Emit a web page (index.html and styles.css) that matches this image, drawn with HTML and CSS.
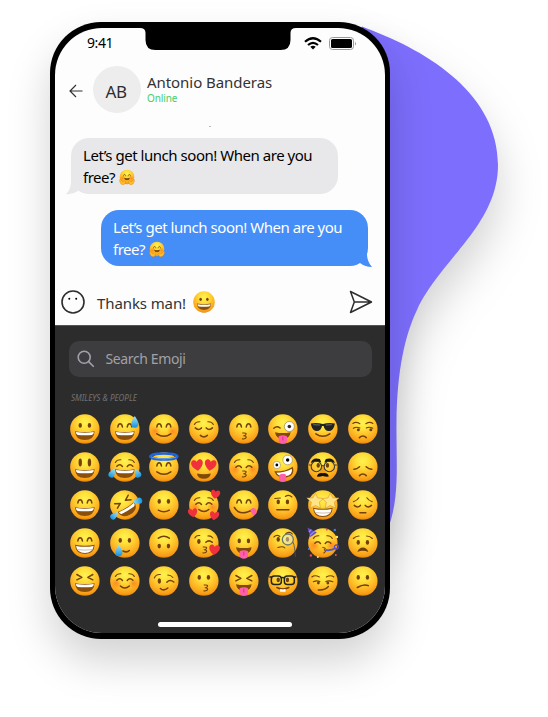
FILE: index.html
```html
<!DOCTYPE html>
<html lang="en">
<head>
<meta charset="utf-8">
<title>Chat</title>
<link rel="stylesheet" href="styles.css">
</head>
<body>
<svg class="defs" width="0" height="0" aria-hidden="true">
  <defs>
    <radialGradient id="skin" cx=".5" cy=".3" r=".72">
      <stop offset="0" stop-color="#fff250"/><stop offset=".3" stop-color="#ffe03a"/>
      <stop offset=".68" stop-color="#fdb424"/><stop offset=".9" stop-color="#f79a14"/><stop offset="1" stop-color="#cf7208"/>
    </radialGradient>
    <radialGradient id="blush"><stop offset="0" stop-color="#ff5a1c" stop-opacity=".55"/><stop offset="1" stop-color="#ff6a1c" stop-opacity="0"/></radialGradient>
    <linearGradient id="water" x1="0" y1="0" x2="0" y2="1"><stop offset="0" stop-color="#a5e4fb"/><stop offset="1" stop-color="#1490d8"/></linearGradient>
    <g id="face"><circle r="14.700" fill="url(#skin)"/></g>
    <g id="cheeks"><circle cx="-8.600" cy="2.200" r="5.400" fill="url(#blush)"/><circle cx="8.600" cy="2.200" r="5.400" fill="url(#blush)"/></g>
    <g id="dots" fill="#734009"><ellipse cx="-4.600" cy="-3.600" rx="1.700" ry="2.300"/><ellipse cx="4.600" cy="-3.600" rx="1.700" ry="2.300"/></g>
    <g id="tall" fill="#734009"><ellipse cx="-4.600" cy="-4.500" rx="1.700" ry="4"/><ellipse cx="4.600" cy="-4.500" rx="1.700" ry="4"/></g>
    <g id="happy" class="ln"><path d="M-7-2C-6.500-6.500-3-6.500-2.400-2M2.400-2C3-6.500 6.500-6.500 7-2"/></g>
    <g id="shut" class="ln"><path d="M-8.600-1.100Q-5.300 2-2.400-1.100M2.400-1.100Q5.300 2 8.600-1.100"/></g>
    <g id="arcs" class="ln"><path d="M-8-.8Q-5-3.600-2.400-.6M2.400-.6Q5-3.600 8-.8"/></g>
    <g id="brows" class="ln thin"><path d="M-9.500-4.600Q-8-7.400-4-7.200M9.500-4.600Q8-7.400 4-7.200"/></g>
    <g id="squint" class="ln"><path d="M-8-6.500L-3-3.700-8-1.200M8-6.500L3-3.700 8-1.200"/></g>
    <g id="grin"><path d="M-9.800 2.200Q0 4 9.800 2.200Q9.400 11 0 11Q-9.400 11-9.800 2.200Z" fill="#8a4f0a"/><path d="M-9 2.900Q0 4.500 9 2.900Q8.800 5.700 7 6Q0 6.700-7 6Q-8.800 5.700-9 2.900Z" fill="#fff"/></g>
    <g id="beam"><path d="M-9.800 1.800Q0 3.600 9.800 1.800Q9.400 11 0 11Q-9.400 11-9.800 1.800Z" fill="#8b5110"/><path d="M-8.800 2.900Q0 4.600 8.800 2.900Q7.800 9.900 0 9.900Q-7.800 9.900-8.800 2.900Z" fill="#fff"/><path d="M-8 6.600Q0 7.600 8 6.600" fill="none" stroke="#b9a48a" stroke-width=".7"/></g>
    <g id="smile" class="ln"><path d="M-7 4.800Q0 9.800 7 4.800"/></g>
    <g id="smallsmile" class="ln"><path d="M-3.500 6.400Q0 9.600 3.500 6.400"/></g>
    <g id="kiss" class="ln thin"><path d="M-1.200 4Q3 3.600 2.100 5.400Q1.600 6.600-.2 6.800Q3 7.100 2.200 8.800Q1.600 10.200-1.400 9.900"/></g>
    <g id="frown" class="ln"><path d="M-3.400 8.600Q0 5.200 3.400 8.600"/></g>
    <g id="tongue"><path d="M-7.800 3.200Q0 5 7.800 3.200Q7 9.800 0 9.800Q-7 9.800-7.800 3.200Z" fill="#804908"/><path d="M-4.200 7.300Q0 5.400 4.200 7.300V11Q4 14.800 0 14.800Q-4 14.800-4.200 11Z" fill="#ff5ea8"/><path d="M0 7.600V11.400" stroke="#d92f82" stroke-width=".9"/></g>
    <path id="heart" d="M0 4.400C-7-.3-4.800-5.200-1.800-4.400Q-.4-4 0-2.600Q.4-4 1.800-4.400C4.800-5.200 7-.3 0 4.400Z" fill="#f0303c"/>
    <path id="drop" d="M0-6Q3.600-.6 3.600 2A3.600 3.800 0 0 1-3.600 2Q-3.600-.6 0-6Z" fill="url(#water)"/>
    <g id="hug">
      <use href="#face"/><use href="#cheeks"/><use href="#happy"/><path d="M-6 1.500Q0 3 6 1.500Q5 6.600 0 6.600Q-5 6.600-6 1.500Z" fill="#804908"/>
      <g fill="#ffbd2a" stroke="#d98412" stroke-width=".8"><path d="M-15 6Q-14 3-12 6L-9 9.500L-4 7Q-2 7.500-3.500 9.500Q-2 14-7 15.400Q-14 16-15 6Z"/><path d="M15 6Q14 3 12 6L9 9.500L4 7Q2 7.500 3.500 9.500Q2 14 7 15.400Q14 16 15 6Z"/></g>
    </g>
  </defs>
</svg>

<main class="stage">
  <svg class="blob" width="548" height="717" viewBox="0 0 548 717" aria-hidden="true">
    <path d="M340 60L362 26.500L367 28.500C430 52 498 95 498 165C498 225 440 260 417 310C405 335 397 370 396.500 423C396 460 400 495 389 526L340 540Z" fill="#7d6efd"/>
  </svg>

  <section class="phone">
    <div class="screen">
      <svg class="notch" width="156" height="22" viewBox="0 0 156 22" aria-hidden="true"><path d="M0 0Q5.500 0 5.500 5V12Q5.500 22 15.500 22H140.500Q150.500 22 150.500 12V5Q150.500 0 156 0Z"/></svg>

      <header class="status">
        <span class="clock">9:41</span>
        <svg class="wifi" width="18" height="13" viewBox="0 0 18 13"><g fill="none" stroke="#000" stroke-width="2.200"><path d="M1 4.800Q9-2.300 17 4.800"/><path d="M4 8Q9 3.600 14 8"/></g><path d="M6.300 9.700Q9 7.600 11.700 9.700L9 12.500Z"/></svg>
        <svg class="battery" width="28" height="13" viewBox="0 0 28 13"><rect x=".5" y=".5" width="24" height="12" rx="3" fill="none" stroke="#999"/><rect x="2" y="2" width="21" height="9" rx="1.600"/><path d="M26 4.500Q27.600 6.500 26 8.500Z" fill="#888"/></svg>
      </header>

      <div class="contact">
        <svg class="back" width="14" height="14" viewBox="0 0 14 14"><path d="M13.500 7H1M7 1L1 7L7 13" fill="none" stroke="#333" stroke-width="1.200"/></svg>
        <div class="avatar">AB</div>
        <div class="who"><div class="name">Antonio Banderas</div><div class="online">Online</div></div>
      </div>
      <div class="mark"></div>

      <div class="messages">
        <div class="bubble received">
          <svg class="tail" width="16" height="18" viewBox="0 0 16 18"><path d="M5 0Q6 12 0 17Q6 18 12 14L16 10V0Z" fill="#e8e8ea"/></svg>
          <p>Let’s get lunch soon! When are you<br>free? <svg class="inline-emoji" viewBox="-16 -16 32 32"><use href="#hug"/></svg></p>
        </div>
        <div class="bubble sent">
          <svg class="tail" width="16" height="18" viewBox="0 0 16 18"><path d="M11 0Q10 12 16 18Q9 18 4 14L0 10V0Z" fill="#458df7"/></svg>
          <p>Let’s get lunch soon! When are you<br>free? <svg class="inline-emoji" viewBox="-16 -16 32 32"><use href="#hug"/></svg></p>
        </div>
      </div>

      <div class="composer">
        <svg width="24" height="24" viewBox="0 0 24 24"><circle cx="12" cy="12" r="11" fill="none" stroke="#2d2d2d" stroke-width="1.600"/><circle cx="8.300" cy="8.800" r="1"/><circle cx="15.200" cy="8.800" r="1"/></svg>
        <span class="draft">Thanks man!</span>
        <svg class="draft-emoji" viewBox="-15 -15 30 30"><use href="#face"/><use href="#dots"/><use href="#grin"/></svg>
        <svg class="send" width="24" height="24" viewBox="0 0 24 24"><path d="M1.500 1.500L22.500 12L1.500 22.500L5.300 12ZM5.300 12H22" fill="none" stroke="#2d2d2d" stroke-width="1.500" stroke-linejoin="round"/></svg>
      </div>

      <div class="keyboard">
        <div class="search">
          <svg width="18" height="18" viewBox="0 0 18 18"><g fill="none" stroke="#a1a1a7" stroke-width="1.600" stroke-linecap="round"><circle cx="7.200" cy="7.200" r="6"/><path d="M11.600 11.600L16.300 16.300"/></g></svg>
          <span>Search Emoji</span>
        </div>
        <div class="category">SMILEYS &amp; PEOPLE</div>

        <div class="grid">
          <svg viewBox="-19.85 -19 39.7 38"><use href="#face"/><use href="#dots"/><use href="#grin"/></svg>
          <svg viewBox="-19.85 -19 39.7 38"><use href="#face"/><use href="#happy"/><use href="#grin"/><use href="#drop" x="10" y="-7"/></svg>
          <svg viewBox="-19.85 -19 39.7 38"><use href="#face"/><use href="#cheeks"/><use href="#happy"/><use href="#smile"/></svg>
          <svg viewBox="-19.85 -19 39.7 38"><use href="#face"/><use href="#brows"/><use href="#shut"/><use href="#smallsmile"/></svg>
          <svg viewBox="-19.85 -19 39.7 38"><use href="#face"/><use href="#happy"/><use href="#kiss"/></svg>
          <svg viewBox="-19.85 -19 39.7 38"><use href="#face"/><path class="ln" d="M-9-.8Q-6-3.500-2.800-1"/><use href="#tongue"/><circle cx="6.500" cy="-2.500" r="5" fill="#fff" stroke="#83704f" stroke-width=".6"/><circle cx="6.500" cy="-2.500" r="1.800" fill="#352b24"/></svg>
          <svg viewBox="-19.85 -19 39.7 38"><use href="#face"/><path d="M-12-5.500Q-6-6.500 0-5Q6-6.500 12-5.500L11.500-3Q10 2 6 2Q1.800 2 .8-3H-.8Q-1.800 2-6 2Q-10 2-11.500-3Z" fill="#202224"/><path d="M-9.500-4.300L-3-4M3-4L9-4.300" stroke="#6c6c6c"/><use href="#smile"/></svg>
          <svg viewBox="-19.85 -19 39.7 38"><use href="#face"/><path class="ln thin" d="M-10-5.500Q-7-7.800-3-5.300M10-5.500Q7-7.800 3-5.300"/><path class="ln thin" d="M-9.500-.7Q-6.500-2.500-3-1M3.500-1Q6.500-2.500 10-.7"/><circle cx="-4.500" cy=".8" r="1.500" fill="#734009"/><circle cx="8" cy=".8" r="1.500" fill="#734009"/><use href="#frown"/></svg>

          <svg viewBox="-19.85 -19 39.7 38"><use href="#face"/><use href="#tall"/><use href="#grin"/></svg>
          <svg viewBox="-19.85 -19 39.7 38"><use href="#face"/><use href="#brows"/><use href="#arcs"/><use href="#grin"/><use href="#drop" transform="translate(-12.500 6) rotate(28) scale(.85)"/><use href="#drop" transform="translate(12.500 6) rotate(-28) scale(.85)"/></svg>
          <svg viewBox="-19.85 -19 39.7 38"><use href="#face"/><ellipse cy="-10.600" rx="13.500" ry="3" fill="none" stroke="#2164dd" stroke-width="2.500"/><path d="M-12.500-10Q0-6 12.500-10" fill="none" stroke="#69b7ff" stroke-width=".8"/><use href="#happy" y="1"/><use href="#smile"/></svg>
          <svg viewBox="-19.85 -19 39.7 38"><use href="#face"/><use href="#heart" transform="translate(-6.500 -1.700) rotate(-8) scale(1.250)"/><use href="#heart" transform="translate(6.500 -1.700) rotate(8) scale(1.250)"/><path d="M-7 6.500Q0 8 7 6.500Q6 11.800 0 11.800Q-6 11.800-7 6.500Z" fill="#804908"/></svg>
          <svg viewBox="-19.85 -19 39.7 38"><use href="#face"/><use href="#cheeks"/><use href="#brows"/><use href="#arcs" y="1"/><use href="#kiss"/></svg>
          <svg viewBox="-19.85 -19 39.7 38"><use href="#face"/><g stroke="#806e50" stroke-width=".5" fill="#fff"><circle cx="-6" cy="-2" r="3.700"/><circle cx="4.800" cy="-7" r="4.800"/></g><circle cx="-6" cy="-2" r="1.400"/><circle cx="4.800" cy="-7" r="1.700"/><path d="M-7.500 5Q3 5 9.500.7Q11.500 9 2 10Q-5 10.500-7.500 5Z" fill="#fff" stroke="#804908" stroke-width="1.300"/><path d="M-3.800 8Q0 6 3 7.500L3.500 11.500Q3.500 15 0 15Q-3.800 15-3.800 11Z" fill="#ff5ea8"/></svg>
          <svg viewBox="-19.85 -19 39.7 38"><use href="#face"/><use href="#dots" y="2"/><path d="M-12-4Q-10.500-10-3-8L-1.500-4.500Q-7-6-12-4ZM12-4Q10.500-10 3-8L1.500-4.500Q7-6 12-4Z" fill="#171717"/><path d="M-1.500 0Q0-2 1.500 0L3.500 6.500Q0 8-3.500 6.500Z" fill="#eca01c"/><g fill="none" stroke="#403c37" stroke-width="1.100"><circle cx="-6.500" cy="-.5" r="5.200"/><circle cx="6.500" cy="-.5" r="5.200"/><path d="M-1.500-1Q0-2 1.500-1M-14-2H-12M12-2H14"/></g><path d="M-6 9.500Q-5 5.500 0 6.200Q5 5.500 6 9.500Q3 10 0 9Q-3 10-6 9.500Z" fill="#15100c"/></svg>
          <svg viewBox="-19.85 -19 39.7 38"><use href="#face"/><path class="ln" d="M-9 2.200Q-6 2.300-3.300-.2M9 2.200Q6 2.300 3.300-.2"/><use href="#frown"/></svg>

          <svg viewBox="-19.85 -19 39.7 38"><use href="#face"/><use href="#happy"/><use href="#grin"/></svg>
          <svg viewBox="-19.85 -19 39.7 38"><g transform="rotate(-32)"><use href="#face"/><use href="#squint"/><use href="#grin"/></g><use href="#drop" transform="translate(-10.500 10.500) rotate(45) scale(.8)"/><use href="#drop" transform="translate(12.500 -4) rotate(-100) scale(.85)"/></svg>
          <svg viewBox="-19.85 -19 39.7 38"><use href="#face"/><use href="#dots"/><path class="ln" d="M-5.500 5.200Q0 8.500 5.500 5.200"/></svg>
          <svg viewBox="-19.85 -19 39.7 38"><use href="#face"/><use href="#cheeks"/><use href="#brows"/><use href="#arcs"/><path class="ln" d="M-5 4.500Q0 8.500 5 4.500"/><use href="#heart" transform="translate(11.500 -10.500) rotate(8)"/><use href="#heart" transform="translate(-11 8) rotate(-8)"/><use href="#heart" transform="translate(10.500 11) rotate(8)"/></svg>
          <svg viewBox="-19.85 -19 39.7 38"><use href="#face"/><use href="#happy"/><path class="ln" d="M-9.500 2.500Q-4 12 9 4.500"/><path d="M6.500 5Q10 1 12.500 5Q14 9 10 10Q8 10 6.500 5Z" fill="#ff5ea8"/></svg>
          <svg viewBox="-19.85 -19 39.7 38"><use href="#face"/><use href="#dots" y=".5"/><path class="ln thin" d="M-8-6.500L-2.500-7M2.500-8.500Q6-11 9-8"/><path class="ln" d="M-6 4.800H6"/></svg>
          <svg viewBox="-19.85 -19 39.7 38"><use href="#face"/><use href="#beam" y="1"/><g fill="#ffe488" stroke="#d99a33" stroke-width=".6"><path id="star" d="M-7.500-11.500L-5-7L1-6.500L-3.500-3L-2.500 3L-7.500 .5L-12.500 3L-11.500-3L-16-7L-10-7Z"/><use href="#star" transform="scale(-1 1)"/></g></svg>
          <svg viewBox="-19.85 -19 39.7 38"><use href="#face"/><path class="ln thin" d="M-9.500-3.300Q-5.500-4.500-4-7.200M9.500-3.300Q5.500-4.500 4-7.200"/><use href="#shut" y="1.500"/><path class="ln" d="M-3 7.800H3"/></svg>

          <svg viewBox="-19.85 -19 39.7 38"><use href="#face"/><use href="#happy"/><use href="#beam"/></svg>
          <svg viewBox="-19.85 -19 39.7 38"><use href="#face"/><use href="#dots" y="1"/><path class="ln" d="M-2 8Q2 10 4.500 7.500"/><use href="#drop" x="-6" y="7.500"/></svg>
          <svg viewBox="-19.85 -19 39.7 38"><use href="#face"/><g transform="rotate(180)"><use href="#dots" y=".5"/><path class="ln" d="M-5.500 4.800Q0 8.600 5.500 4.800"/></g></svg>
          <svg viewBox="-19.85 -19 39.7 38"><use href="#face"/><ellipse cx="-5" cy="-1.500" rx="1.700" ry="2.400" fill="#734009"/><path class="ln" d="M2-.7Q5-3.500 8.500-.7"/><path class="ln thin" d="M-9-5Q-8-8-4-7.500M4-7Q7-7.500 9-5"/><use href="#kiss" x=".5"/><use href="#heart" transform="translate(10.500 7) rotate(8) scale(1.150)"/></svg>
          <svg viewBox="-19.85 -19 39.7 38"><use href="#face"/><use href="#dots" y="1.500"/><use href="#tongue" y="1"/></svg>
          <svg viewBox="-19.85 -19 39.7 38"><use href="#face"/><use href="#dots"/><path class="ln thin" d="M-9-6Q-6-9-3-6.500M3-9.500Q7-12 9.500-9M-5 4.500Q0 3 2 4.800"/><circle cx="5" cy="-3.500" r="5.500" fill="#e9eee0" fill-opacity=".45" stroke="#68777a" stroke-width="1.300"/><path d="M10-1Q12 2 12.500 14" fill="none" stroke="#465057" stroke-width=".8"/></svg>
          <svg viewBox="-19.85 -19 39.7 38"><use href="#face"/><use href="#cheeks"/><use href="#brows"/><use href="#arcs" y="1"/><path d="M-15.500-15.500L-6-10.500Q-9-8-12.500-6Z" fill="#664bc3"/><path d="M-14-11L-11.500-13.500M-13-7.500L-8-12" stroke="#9786ed" stroke-width="1.300"/><path class="ln thin" d="M0 4.500Q4 5 1.500 7Q4 8 1 10"/><path d="M3 7Q8 8 13 5" fill="none" stroke="#435ed0" stroke-width="2"/><circle cx="13.500" cy="4" r="2" fill="none" stroke="#5b4ac2" stroke-width="1.300"/><g fill="#ef4c62"><circle cx="4" cy="-13.500" r="1"/><circle cx="-12" cy="12.500" r="1.200"/><circle cx="13" cy="12" r="1"/></g><g fill="#3f7af0"><circle cx="12" cy="-13" r="1.200"/><circle cx="-14" cy="6" r="1"/></g><g fill="#ffe463"><circle cx="14" cy="-6" r="1.300"/><circle cx="-5" cy="14" r="1"/></g></svg>
          <svg viewBox="-19.85 -19 39.7 38"><use href="#face"/><use href="#dots" y="3"/><path class="ln thin" d="M-9.500-4.500Q-7-7-3.800-7M9.500-4.500Q7-7 3.800-7"/><path d="M-5.500 9Q-4 4.500 0 4.500Q4 4.500 5.500 9Q0 6.500-5.500 9Z" fill="#734009"/></svg>

          <svg viewBox="-19.85 -19 39.7 38"><use href="#face"/><use href="#squint"/><use href="#grin"/></svg>
          <svg viewBox="-19.85 -19 39.7 38"><use href="#face"/><use href="#cheeks"/><use href="#brows"/><use href="#arcs"/><path class="ln" d="M-4.500 5Q0 9 4.500 5"/></svg>
          <svg viewBox="-19.85 -19 39.7 38"><use href="#face"/><ellipse cx="-4.500" cy="0" rx="1.700" ry="2.700" fill="#734009"/><path class="ln" d="M3 1.200Q6-2 10 1M-3.500 7.500Q0 10.500 4 7"/><path class="ln thin" d="M-9.500-3Q-8-7-3.500-6.500M4-6Q7-6 9-3.500"/></svg>
          <svg viewBox="-19.85 -19 39.7 38"><use href="#face"/><use href="#dots"/><use href="#kiss" x="1.500"/></svg>
          <svg viewBox="-19.85 -19 39.7 38"><use href="#face"/><use href="#squint" y="1"/><use href="#tongue"/></svg>
          <svg viewBox="-19.85 -19 39.7 38"><use href="#face"/><use href="#dots" y="2.500"/><g fill="none" stroke="#25231f" stroke-width="1.500"><rect x="-11.500" y="-5" width="10" height="8.500" rx="3"/><rect x="1.500" y="-5" width="10" height="8.500" rx="3"/><path d="M-13.500-4H-11M-2-3Q0-4 2-3M11-4H13.500"/></g><path class="ln" d="M-6 6.500Q0 9.500 6 6.500"/><path d="M-2.700 8Q0 8.800 2.700 8V10.700H-2.700Z" fill="#fff"/></svg>
          <svg viewBox="-19.85 -19 39.7 38"><use href="#face"/><path class="ln thin" d="M-11-4Q-8-6.500-3.500-4M11-4Q8-6.500 3.500-4"/><path class="ln thin" d="M-9.500 .8Q-6-1-3 .6M3 .6Q6-1 10 .8"/><path class="ln" d="M-4.500 9Q2 9.500 5.500 5.500"/><circle cx="-4.500" cy="2" r="1.400" fill="#734009"/><circle cx="5" cy="2" r="1.400" fill="#734009"/></svg>
          <svg viewBox="-19.85 -19 39.7 38"><use href="#face"/><use href="#dots"/><path class="ln" d="M-5.500 6.500Q1 2.500 5.500 4.700"/></svg>
        </div>
        <div class="home"></div>
      </div>
    </div>
  </section>
</main>
</body>
</html>
```

FILE: styles.css
```css
* { box-sizing: border-box; }

body {
  margin: 0;
  background: #fff;
  font-family: "Noto Sans", sans-serif;
}

.defs { position: absolute; }

.ln {
  fill: none;
  stroke: #734009;
  stroke-width: 1.5;
  stroke-linecap: round;
  stroke-linejoin: round;
}
.thin { stroke-width: 1.1; }

.stage {
  position: relative;
  width: 548px;
  height: 717px;
  padding: 22px 0 0 50px;
  overflow: hidden;
}

.blob {
  position: absolute;
  inset: 0;
  filter: drop-shadow(0 24px 22px rgba(0, 0, 0, .18));
}

.phone {
  position: relative;
  width: 340px;
  height: 617px;
  padding: 6px 5px;
  background: #000;
  border-radius: 51px;
  box-shadow: 0 22px 44px rgba(0, 0, 0, .18);
}

.screen {
  position: relative;
  display: flex;
  flex-direction: column;
  width: 330px;
  height: 605px;
  background: #fdfdfd;
  border-radius: 47px;
  overflow: hidden;
}

.notch {
  position: absolute;
  top: 0;
  left: 85px;
}

.status {
  display: flex;
  align-items: center;
  height: 30px;
  padding: 0 28px 0 32px;
}
.clock {
  margin: -2px auto 0 0;
  font-size: 14px;
  letter-spacing: -.4px;
}
.wifi { margin-right: 7px; }

.contact {
  display: flex;
  align-items: center;
  height: 48px;
  margin-top: 8px;
  padding-left: 14px;
}
.avatar {
  display: grid;
  place-items: center;
  width: 48px;
  height: 47px;
  margin: 0 6px 1px 10px;
  padding: 4px 2px 0 0;
  border-radius: 50%;
  background: #ededed;
  color: #2d2d2d;
  font-size: 17px;
  letter-spacing: -.4px;
}
.back { margin-top: 2px; }
.who { margin-top: -3px; }
.name {
  color: #333;
  font-size: 15px;
  line-height: 18px;
  letter-spacing: -.06px;
}
.online {
  color: #43cf6b;
  font-size: 10px;
  line-height: 14px;
  letter-spacing: -.1px;
}

.mark {
  width: 2px;
  height: 1px;
  margin: 12px 0 0 154px;
  background: #bbb;
}

.messages {
  display: flex;
  flex-direction: column;
  gap: 16px;
  margin-top: 11px;
  padding: 0 17px 0 16px;
}
.bubble {
  position: relative;
  width: 267px;
  height: 56px;
  padding: 6px 12px;
  border-radius: 18px;
  font-size: 15px;
  line-height: 22px;
  letter-spacing: -.47px;
  white-space: nowrap;
}
.bubble p { margin: 0; }
.received { background: #e8e8ea; color: #000; }
.sent {
  align-self: flex-end;
  background: #458df7;
  color: #fff;
}
.tail {
  position: absolute;
  bottom: -.5px;
}
.received .tail { left: -5px; }
.sent .tail { right: -4px; }
.inline-emoji {
  width: 16px;
  height: 16px;
  margin-left: 0;
  vertical-align: -2px;
}

.composer {
  display: flex;
  align-items: center;
  height: 59px;
  padding: 13px 12px 0 6px;
}
.draft {
  margin: 2px 7px 0 12px;
  color: #333;
  font-size: 15px;
  letter-spacing: -.1px;
}
.draft-emoji {
  width: 22px;
  height: 22px;
  margin-bottom: 1px;
}
.send { margin-left: auto; }

.keyboard {
  flex: 1;
  padding: 15px 0 0 10px;
  background: #2c2c2c;
  border-top: 1px solid #555;
}
.search {
  display: flex;
  align-items: center;
  gap: 10.5px;
  width: 303px;
  height: 36px;
  margin-left: 4px;
  padding-left: 8px;
  border-radius: 10px;
  background: #3d3d3f;
  color: #a1a1a7;
  font-size: 14px;
  letter-spacing: -.38px;
}
.search span { margin-top: -1px; }
.category {
  margin: 15px 0 0 6px;
  color: #737373;
  font-size: 8px;
  font-style: italic;
  line-height: 12px;
  letter-spacing: 0;
}
.grid {
  display: grid;
  grid-template-columns: repeat(8, 39.7px);
  grid-auto-rows: 38px;
  margin-top: 6px;
}
.grid svg { width: 39.7px; height: 38px; overflow: visible; }

.home {
  width: 134px;
  height: 5px;
  margin: 22px 0 0 93px;
  border-radius: 3px;
  background: #fff;
}
```
